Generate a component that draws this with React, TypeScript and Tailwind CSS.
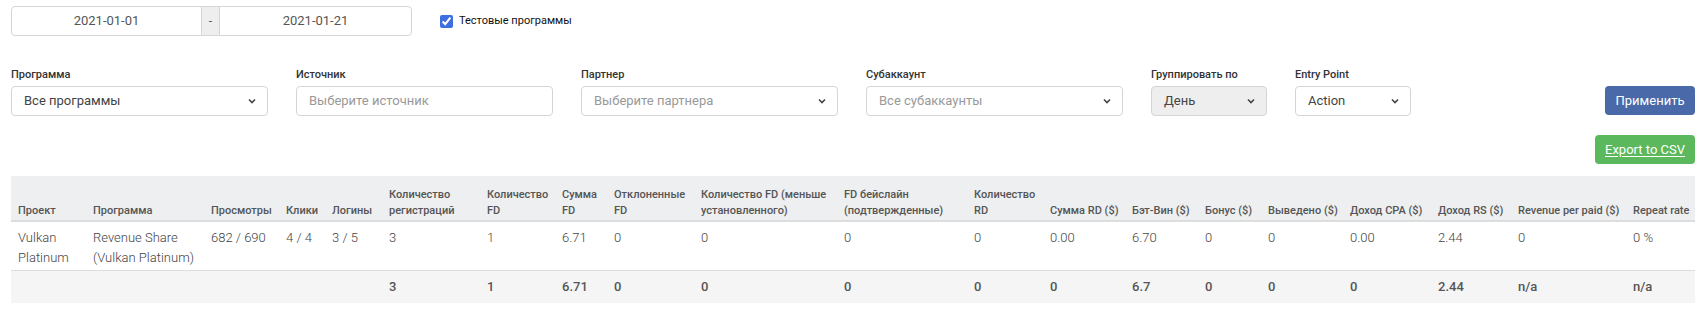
import React from "react";

const Chevron = () => (
  <svg width="8" height="6" viewBox="0 0 8 6" className="shrink-0">
    <path d="M1 1.5l3 3 3-3" fill="none" stroke="#444" strokeWidth="1.6" />
  </svg>
);

interface FieldProps {
  label: string;
  value: string;
  placeholder?: boolean;
  select?: boolean;
  width: string;
  muted?: boolean;
}

function Field({ label, value, placeholder, select, width, muted }: FieldProps) {
  return (
    <div className={`flex flex-col ${width}`}>
      <label className="mb-[3px] text-[11px] leading-[17px] font-medium text-[#333]">{label}</label>
      <div
        className={`flex h-[30px] items-center justify-between rounded-[4px] border border-[#d5d5d5] pl-[12px] pr-[11px] text-[13px] ${
          muted ? "bg-[#eeeeee]" : "bg-white"
        } ${placeholder ? "text-[#999]" : "text-[#444]"}`}
      >
        <span>{value}</span>
        {select && <Chevron />}
      </div>
    </div>
  );
}

const colWidths = [75, 118, 75, 46, 57, 98, 75, 52, 87, 143, 130, 76, 82, 73, 63, 82, 88, 80, 115, 69];

const headers: React.ReactNode[] = [
  "Проект",
  "Программа",
  "Просмотры",
  "Клики",
  "Логины",
  <>Количество<br />регистраций</>,
  <>Количество<br />FD</>,
  <>Сумма<br />FD</>,
  <>Отклоненные<br />FD</>,
  <>Количество FD (меньше<br />установленного)</>,
  <>FD бейслайн<br />(подтвержденные)</>,
  <>Количество<br />RD</>,
  "Сумма RD ($)",
  "Бэт-Вин ($)",
  "Бонус ($)",
  "Выведено ($)",
  "Доход CPA ($)",
  "Доход RS ($)",
  "Revenue per paid ($)",
  "Repeat rate",
];

const row: React.ReactNode[] = [
  <>Vulkan<br />Platinum</>,
  <>Revenue Share<br />(Vulkan Platinum)</>,
  "682 / 690",
  "4 / 4",
  "3 / 5",
  "3",
  "1",
  "6.71",
  "0",
  "0",
  "0",
  "0",
  "0.00",
  "6.70",
  "0",
  "0",
  "0.00",
  "2.44",
  "0",
  "0 %",
];

const totals = ["", "", "", "", "", "3", "1", "6.71", "0", "0", "0", "0", "0", "6.7", "0", "0", "0", "2.44", "n/a", "n/a"];

export default function App() {
  return (
    <div className="min-h-[309px] bg-white pl-[11px] pr-[10px] pt-[6px] font-['Roboto','Liberation_Sans',sans-serif]">
      {/* Dates */}
      <div className="flex items-center">
        <div className="flex h-[30px] w-[401px] text-[13px] text-[#555]">
          <div className="flex w-[191px] items-center justify-center rounded-l-[4px] border border-[#d5d5d5]">2021-01-01</div>
          <div className="flex w-[17px] items-center justify-center border-y border-[#d5d5d5] bg-[#eeeeee] text-[12px]">-</div>
          <div className="flex flex-1 items-center justify-center rounded-r-[4px] border border-[#d5d5d5]">2021-01-21</div>
        </div>
        <label className="ml-[28px] flex items-center gap-[6px] text-[11px] text-[#111]">
          <input type="checkbox" defaultChecked className="h-[13px] w-[13px] accent-[#3d6fe0]" />
          Тестовые программы
        </label>
      </div>

      {/* Filters */}
      <div className="mt-[30px] flex items-end">
        <div className="flex gap-[28px]">
          <Field label="Программа" value="Все программы" select width="w-[257px]" />
          <Field label="Источник" value="Выберите источник" placeholder width="w-[257px]" />
          <Field label="Партнер" value="Выберите партнера" placeholder select width="w-[257px]" />
          <Field label="Субаккаунт" value="Все субаккаунты" placeholder select width="w-[257px]" />
          <Field label="Группировать по" value="День" select muted width="w-[116px]" />
          <Field label="Entry Point" value="Action" select width="w-[116px]" />
        </div>
        <button className="ml-auto mb-px h-[29px] w-[90px] rounded-[4px] bg-[#4a69a8] text-[13px] text-white">
          Применить
        </button>
      </div>

      <div className="mt-[19px] flex justify-end">
        <button className="h-[29px] w-[100px] rounded-[4px] bg-[#5cb85c] text-[13px] text-white underline underline-offset-2">
          Export to CSV
        </button>
      </div>

      {/* Table */}
      <table className="mt-[12px] w-[1684px] table-fixed border-collapse">
        <colgroup>
          {colWidths.map((w, i) => (
            <col key={i} style={{ width: w }} />
          ))}
        </colgroup>
        <thead>
          <tr className="h-[45px] border-b-2 border-[#dddddd] bg-[#edeff1]">
            {headers.map((h, i) => (
              <th
                key={i}
                className="whitespace-nowrap pb-[1px] pl-[7px] text-left align-bottom text-[11px] leading-[16px] font-medium text-[#555]"
              >
                {h}
              </th>
            ))}
          </tr>
        </thead>
        <tbody>
          <tr className="h-[49px]">
            {row.map((c, i) => (
              <td key={i} className="whitespace-nowrap pt-[6px] pl-[7px] align-top text-[13px] leading-[20px] font-light text-[#444]">
                {c}
              </td>
            ))}
          </tr>
          <tr className="h-[33px] border-t border-[#dddddd] bg-[#f5f5f5]">
            {totals.map((c, i) => (
              <td key={i} className="whitespace-nowrap pl-[7px] align-middle text-[13px] font-medium text-[#555]">
                {c}
              </td>
            ))}
          </tr>
        </tbody>
      </table>
    </div>
  );
}
